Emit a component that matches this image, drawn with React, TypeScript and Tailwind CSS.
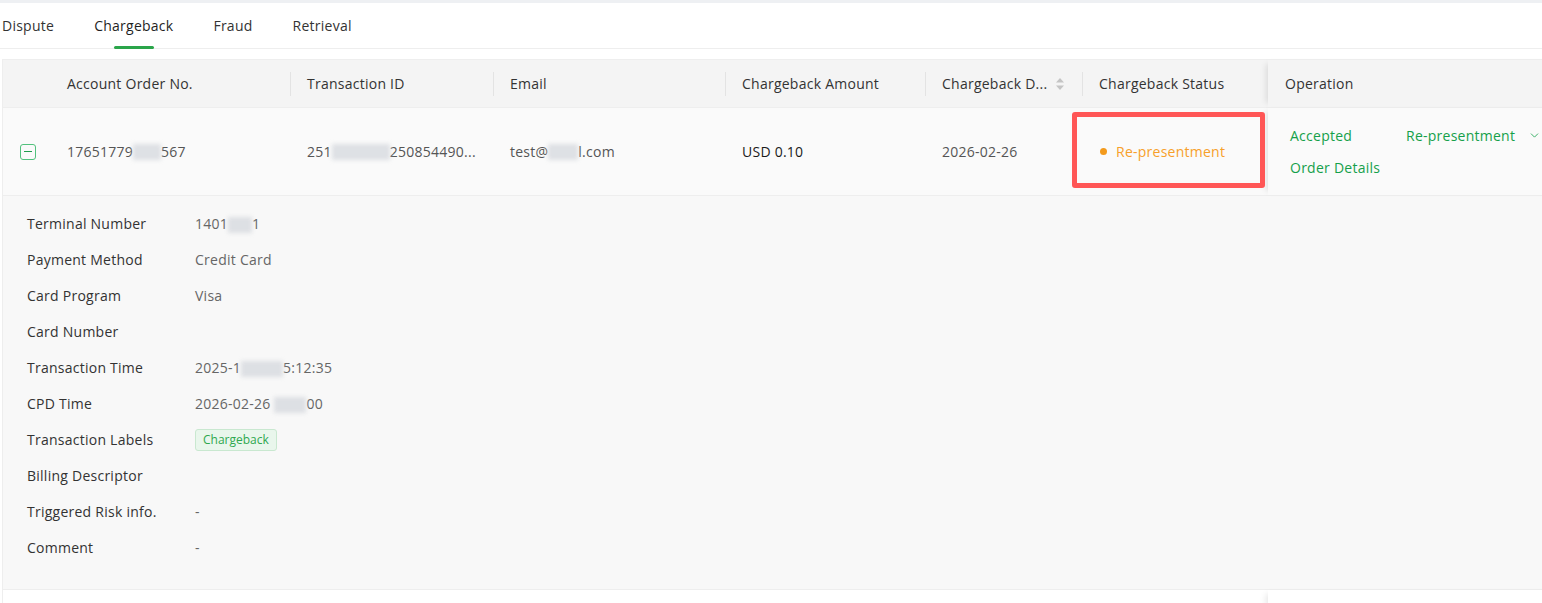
import { ChevronDown } from 'lucide-react'

const font = { fontFamily: '"Open Sans", "Noto Sans", Arial, sans-serif', letterSpacing: '0.25px' }

const tabs = ['Dispute', 'Chargeback', 'Fraud', 'Retrieval']

const columns = [
  { title: 'Account Order No.', width: 'w-[240px]' },
  { title: 'Transaction ID', width: 'w-[203px]' },
  { title: 'Email', width: 'w-[232px]' },
  { title: 'Chargeback Amount', width: 'w-[200px]' },
  { title: 'Chargeback D...', width: 'w-[157px]', sortable: true },
  { title: 'Chargeback Status', width: 'w-[185px]', last: true },
]

// masked chunk of a sensitive value
function Masked({ w }: { w: string }) {
  return <span className={`inline-block h-[16px] ${w} bg-gray-300/70 blur-[2px] align-middle`} />
}

function SortIcon() {
  return (
    <svg width="10" height="14" viewBox="0 0 10 14" className="ml-2">
      <path d="M5 1 L9 5.5 H1 Z" fill="#c4c4c4" />
      <path d="M5 13 L9 8.5 H1 Z" fill="#c4c4c4" />
    </svg>
  )
}

function ExpandIcon() {
  return (
    <span className="flex h-[16px] w-[16px] items-center justify-center rounded-[3px] border-[1.5px] border-[#52c17d]">
      <span className="h-[1.5px] w-[8px] bg-[#1f9d4d]" />
    </span>
  )
}

const details: [string, React.ReactNode][] = [
  ['Terminal Number', <>1401<Masked w="w-[24px]" />1</>],
  ['Payment Method', 'Credit Card'],
  ['Card Program', 'Visa'],
  ['Card Number', ''],
  ['Transaction Time', <>2025-1<Masked w="w-[42px]" />5:12:35</>],
  ['CPD Time', <>2026-02-26 <Masked w="w-[32px]" />00</>],
  [
    'Transaction Labels',
    <span className="inline-flex h-[22px] items-center rounded-[3px] border border-[#c9e8d0] bg-[#e9f6ec] px-[7px] text-[12px] tracking-normal text-[#2ea84f]">
      Chargeback
    </span>,
  ],
  ['Billing Descriptor', ''],
  ['Triggered Risk info.', '-'],
  ['Comment', '-'],
]

export default function App() {
  return (
    <div className="h-[603px] w-[1542px] overflow-hidden bg-white text-[14px]" style={font}>
      <div className="h-[3px] bg-[#eef0f3]" />

      {/* Tabs */}
      <div className="flex h-[46px] items-stretch border-b border-[#eeeeee] pl-[2px]">
        {tabs.map((t) => {
          const active = t === 'Chargeback'
          return (
            <div key={t} className="relative mr-[40px] flex items-center">
              <span className={active ? 'text-[#1f1f1f]' : 'text-[#333]'}>{t}</span>
              {active && (
                <span className="absolute bottom-[-1px] left-1/2 h-[3px] w-[40px] -translate-x-1/2 rounded-full bg-[#2aa54a]" />
              )}
            </div>
          )
        })}
      </div>

      {/* Table */}
      <div className="mt-[10px] ml-[2px] w-[1640px] border-t border-l border-[#eeeeee]">
        {/* Header */}
        <div className="flex h-[48px] border-b border-[#eeeeee] bg-[#f4f4f4] text-[#333]">
          <div className="w-[48px]" />
          {columns.map((c) => (
            <div key={c.title} className={`relative flex items-center px-[16px] ${c.width}`}>
              <span>{c.title}</span>
              {c.sortable && <SortIcon />}
              {!c.last && <span className="absolute right-0 top-[12px] h-[24px] w-px bg-[#e3e3e3]" />}
            </div>
          ))}
          <div className="flex flex-1 items-center bg-[#f4f4f4] px-[17px] shadow-[-6px_0_6px_-4px_rgba(0,0,0,0.1)]">
            Operation
          </div>
        </div>

        {/* Expanded row */}
        <div className="relative flex h-[88px] border-b border-[#eeeeee] bg-[#fafafa] text-[#555]">
          <div className="flex w-[48px] items-center pl-[17px]">
            <ExpandIcon />
          </div>
          <div className="flex w-[240px] items-center px-[16px]">
            17651779<Masked w="w-[28px]" />567
          </div>
          <div className="flex w-[203px] items-center px-[16px]">
            251<Masked w="w-[58px]" />250854490...
          </div>
          <div className="flex w-[232px] items-center px-[16px]">
            test@<Masked w="w-[30px]" />l.com
          </div>
          <div className="flex w-[200px] items-center px-[16px] text-[#1a1a1a]">USD 0.10</div>
          <div className="flex w-[157px] items-center px-[16px]">2026-02-26</div>
          <div className="flex w-[185px] items-center gap-[9px] px-[17px] text-[#f7a02a]">
            <span className="h-[7px] w-[7px] rounded-full bg-[#f39a1c]" />
            Re-presentment
          </div>
          <div className="flex flex-1 flex-col gap-[11px] bg-[#fafafa] px-[22px] pt-[17px] text-[#15a04a] shadow-[-6px_0_6px_-4px_rgba(0,0,0,0.1)]">
            <div className="flex items-center">
              <span className="w-[116px]">Accepted</span>
              <span>Re-presentment</span>
              <ChevronDown className="ml-[13px] h-[13px] w-[13px]" strokeWidth={1.5} />
            </div>
            <div>Order Details</div>
          </div>

          {/* highlight around the status cell */}
          <div className="pointer-events-none absolute left-[1069px] top-[4px] h-[76px] w-[193px] rounded-[3px] border-[5px] border-[#ff5656]" />
        </div>

        {/* Details */}
        <div className="border-b border-[#eeeeee] bg-[#f8f8f8] pt-[9px] pb-[24px] pl-[24px]">
          {details.map(([label, value]) => (
            <div key={label} className="flex h-[36px] items-center">
              <span className="w-[168px] text-[#333]">{label}</span>
              <span className="text-[#666]">{value}</span>
            </div>
          ))}
        </div>

        <div className="flex h-[20px]">
          <div className="w-[1265px]" />
          <div className="flex-1 shadow-[-6px_0_6px_-4px_rgba(0,0,0,0.1)]" />
        </div>
      </div>
    </div>
  )
}
